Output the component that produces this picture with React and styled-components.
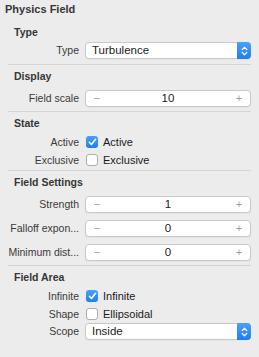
import React from 'react';
import styled, { createGlobalStyle } from 'styled-components';

const GlobalStyle = createGlobalStyle`
  body {
    margin: 0;
    background: #ececec;
    font-family: "Liberation Sans", Arial, sans-serif;
  }
`;

const Panel = styled.div`
  width: 259px;
  height: 357px;
  background: #ececec;
  color: #333;
  overflow: hidden;
`;

const Title = styled.div`
  padding: 2px 0 0 5px;
  margin-bottom: 4px;
  font-size: 11px;
  font-weight: bold;
  line-height: 15px;
  color: #363636;
`;

const Section = styled.div`
  margin: 0 8px;
  border-top: ${p => (p.$first ? 'none' : '1px solid #d5d5d5')};
  padding: 4px 0 ${p => p.$pb || 1}px;
`;

const Heading = styled.div`
  padding-left: 6px;
  margin-bottom: 3px;
  font-size: 10.5px;
  font-weight: bold;
  line-height: 14px;
  color: #363636;
`;

const Row = styled.div`
  display: flex;
  align-items: ${p => p.$align || 'center'};
  height: ${p => p.$h}px;
  gap: 6px;
`;

const Label = styled.div`
  width: 71px;
  flex-shrink: 0;
  text-align: right;
  font-size: 10.5px;
  line-height: 17px;
  color: #3a3a3a;
  white-space: nowrap;
`;

const Box = styled.div`
  flex: 1;
  height: 17px;
  box-sizing: border-box;
  background: #fff;
  border: 1px solid #c8c8c8;
  border-radius: 4px;
  box-shadow: 0 0.5px 0.5px rgba(0, 0, 0, 0.06);
`;

const StepperBox = styled(Box)`
  display: grid;
  grid-template-columns: 16px 1fr 16px;
  align-items: center;
  padding: 0 3px;
`;

const StepSign = styled.span`
  font-size: 11px;
  color: #9a9a9a;
  text-align: center;
  line-height: 15px;
`;

const Value = styled.span`
  font-size: 11.5px;
  color: #1a1a1a;
  text-align: center;
  line-height: 15px;
`;

const SelectBox = styled(Box)`
  display: flex;
  align-items: stretch;
`;

const SelectText = styled.span`
  flex: 1;
  padding-left: 6px;
  font-size: 11.5px;
  line-height: 15px;
  color: #1a1a1a;
`;

const SelectArrow = styled.span`
  width: 14px;
  margin: -1px -1px -1px 0;
  border-radius: 0 4px 4px 0;
  background: linear-gradient(#4aa0fb, #1e7ef2);
  display: flex;
  align-items: center;
  justify-content: center;
`;

const CheckWrap = styled.label`
  display: flex;
  align-items: center;
  gap: 5px;
  margin-left: 1px;
  font-size: 11px;
  color: #1a1a1a;
`;

const CheckSquare = styled.span`
  width: 12px;
  height: 12px;
  box-sizing: border-box;
  border-radius: 3px;
  background: ${p => (p.$on ? 'linear-gradient(#4aa0fb, #1e7ef2)' : '#fff')};
  border: ${p => (p.$on ? 'none' : '1px solid #adadad')};
  display: flex;
  align-items: center;
  justify-content: center;
`;

function Stepper({ label, value }) {
  return (
    <Row $h={24}>
      <Label>{label}</Label>
      <StepperBox>
        <StepSign>−</StepSign>
        <Value>{value}</Value>
        <StepSign>+</StepSign>
      </StepperBox>
    </Row>
  );
}

function Select({ label, value }) {
  return (
    <Row $h={20} $align="flex-start">
      <Label>{label}</Label>
      <SelectBox>
        <SelectText>{value}</SelectText>
        <SelectArrow>
          <svg width="7" height="10" viewBox="0 0 7 10" fill="none" stroke="#fff" strokeWidth="1.3" strokeLinecap="round" strokeLinejoin="round">
            <path d="M1.2 3.6 L3.5 1.3 L5.8 3.6" />
            <path d="M1.2 6.4 L3.5 8.7 L5.8 6.4" />
          </svg>
        </SelectArrow>
      </SelectBox>
    </Row>
  );
}

function Check({ label, text, on }) {
  return (
    <Row $h={18}>
      <Label>{label}</Label>
      <CheckWrap>
        <CheckSquare $on={on}>
          {on && (
            <svg width="9" height="8" viewBox="0 0 9 8" fill="none" stroke="#fff" strokeWidth="1.6" strokeLinecap="round" strokeLinejoin="round">
              <path d="M1.3 4.3 L3.4 6.4 L7.6 1.3" />
            </svg>
          )}
        </CheckSquare>
        {text}
      </CheckWrap>
    </Row>
  );
}

export default function App() {
  return (
    <Panel>
      <GlobalStyle />
      <Title>Physics Field</Title>

      <Section $first $pb={2}>
        <Heading>Type</Heading>
        <Select label="Type" value="Turbulence" />
      </Section>

      <Section>
        <Heading>Display</Heading>
        <Stepper label="Field scale" value="10" />
      </Section>

      <Section>
        <Heading>State</Heading>
        <Check label="Active" text="Active" on />
        <Check label="Exclusive" text="Exclusive" />
      </Section>

      <Section>
        <Heading>Field Settings</Heading>
        <Stepper label="Strength" value="1" />
        <Stepper label="Falloff expon..." value="0" />
        <Stepper label="Minimum dist..." value="0" />
      </Section>

      <Section>
        <Heading>Field Area</Heading>
        <Check label="Infinite" text="Infinite" on />
        <Check label="Shape" text="Ellipsoidal" />
        <Select label="Scope" value="Inside" />
      </Section>
    </Panel>
  );
}
